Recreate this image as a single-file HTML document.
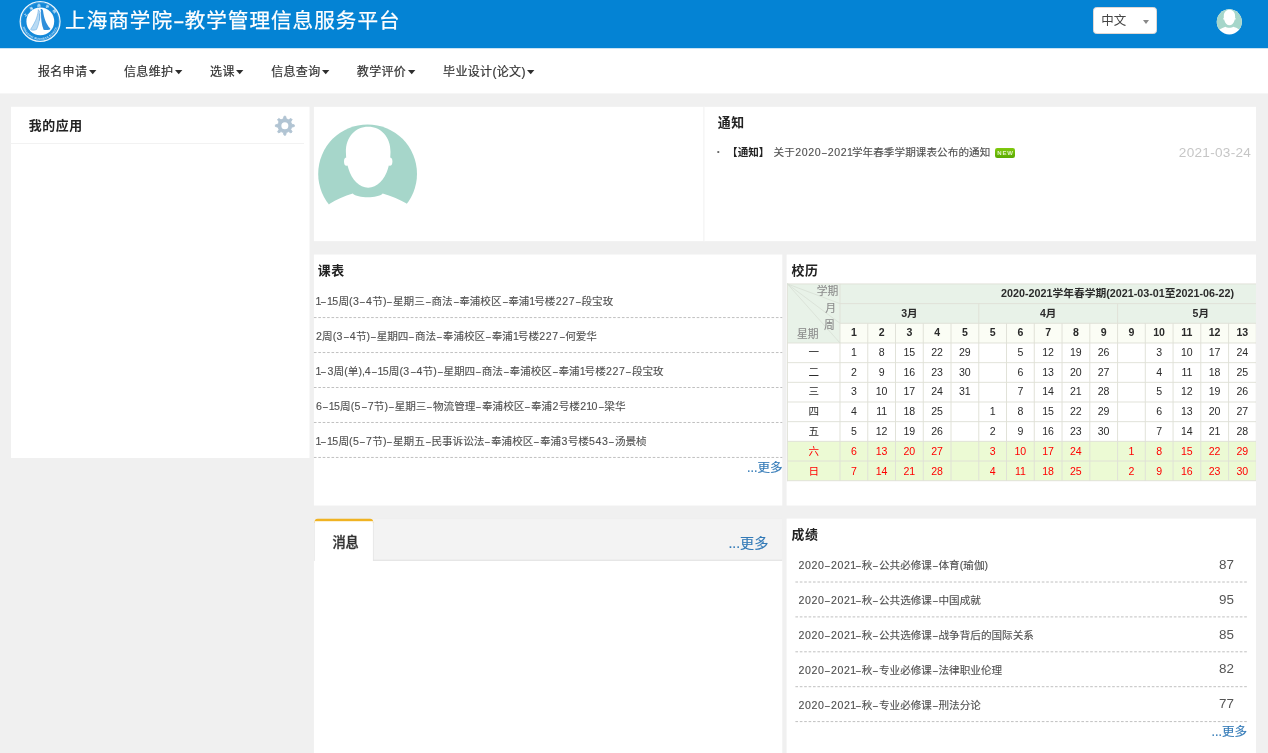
<!DOCTYPE html>
<html lang="zh-CN">
<head>
<meta charset="utf-8">
<title>上海商学院-教学管理信息服务平台</title>
<style>
*{box-sizing:border-box;margin:0;padding:0}
html,body{width:1268px;height:753px;overflow:hidden;background:#f0f0f0}
body{font-family:"Liberation Sans","Noto Sans CJK SC",sans-serif;color:#333;position:relative;font-size:10.4px}
i{font-style:normal}
a{text-decoration:none;color:#337ab7}
h3{margin:0}
.abs{position:absolute}
.t{position:absolute;white-space:nowrap}
#pg{position:absolute;left:0;top:0;width:1268px;height:753px;will-change:transform;overflow:hidden}
#hdr{position:absolute;left:0;top:0;width:1268px;height:48px}
#nav{position:absolute;left:0;top:48px;width:1268px;height:46px}
.ni{position:absolute;top:14.6px;font-size:12px;letter-spacing:.33px;line-height:18px;color:#333;white-space:nowrap;-webkit-text-stroke:.2px #333}
.caret{position:relative;display:inline-block;margin-left:1.5px;top:-1.1px;letter-spacing:0;vertical-align:baseline}
.h3{position:absolute;font-weight:bold;font-size:12.9px;letter-spacing:.6px;line-height:18px;color:#222;white-space:nowrap}
.row{position:absolute;font-size:10.6px;line-height:16px;color:#505050;white-space:nowrap;-webkit-text-stroke:0.12px #505050}
.row i{display:inline-block;text-align:center}
.row .h{width:6.6px;transform:scaleX(1.9);-webkit-text-stroke:0}
.row .d{width:6.5px}
.row .o{width:4.9px}
.row .p{width:3.6px}
.row .c{width:2.4px}
.more{position:absolute;font-size:12.5px;line-height:16px;color:#337ab7;white-space:nowrap;-webkit-text-stroke:.15px #337ab7}
#cal{position:absolute;left:787px;top:283px;width:469.05px;height:199px;overflow:hidden}
#cal table{position:absolute;left:0.45px;top:0.35px;border-collapse:collapse;table-layout:fixed;width:607.65px;font-size:10.57px;color:#2b2b2b}
#cal td,#cal th{border:0;text-align:center;padding:0;height:19.665px;line-height:14px;vertical-align:middle;font-weight:normal;overflow:hidden;white-space:nowrap}
#cal th{font-weight:bold;font-size:10.57px}
#cal tr.we td{color:#f00;position:relative;top:.7px}
#cal td.wd{font-size:10.57px}
</style>
</head>
<body>
<div id="pg">

<svg class="abs" style="left:0;top:0" width="1268" height="753" viewBox="0 0 1268 753"><rect x="0.00" y="0.00" width="1268.00" height="48.45" fill="#0483d4"/><rect x="0.00" y="48.45" width="1268.00" height="44.97" fill="#fff"/><rect x="10.95" y="106.80" width="298.55" height="351.15" fill="#fff"/><rect x="10.95" y="143.00" width="293.05" height="1.00" fill="#f2f2f2"/><rect x="313.90" y="106.85" width="942.15" height="134.29" fill="#fff"/><rect x="703.40" y="106.85" width="1.00" height="134.29" fill="#f1f1f1"/><rect x="313.90" y="254.53" width="468.37" height="251.03" fill="#fff"/><rect x="786.62" y="254.53" width="469.43" height="251.03" fill="#fff"/><rect x="313.90" y="518.57" width="468.37" height="234.43" fill="#fff"/><rect x="313.90" y="518.57" width="468.37" height="42.13" fill="#dcdcdc"/><rect x="313.90" y="518.57" width="468.37" height="41.23" fill="#f3f3f3"/><rect x="314.10" y="521.50" width="59.60" height="39.20" fill="#e4e4e4"/><path d="M314.6 523 V521.8 a3 3 0 0 1 3 -3 H370.1 a3 3 0 0 1 3 3 V523 Z" fill="#f0b323"/><rect x="314.70" y="521.20" width="58.20" height="39.80" fill="#fff"/><rect x="786.62" y="518.57" width="469.43" height="234.43" fill="#fff"/></svg>
<header id="hdr">
<svg class="abs" style="left:14px;top:0px" width="56" height="46" viewBox="14 0 56 46">
<defs>
<path id="arcT" d="M 24.6 23.5 A 15.6 15.6 0 1 1 57.8 23.5"/>
<path id="arcB" d="M 21.9 21.5 A 18.2 18.2 0 0 0 58.3 21.5"/>
</defs>
<circle cx="40.1" cy="21.5" r="19.9" fill="#1489d9" stroke="#e9f4fc" stroke-width="1.3"/>
<circle cx="40.1" cy="21.5" r="18.7" fill="none" stroke="#4ba6e4" stroke-width="0.5"/>
<circle cx="40.3" cy="21.4" r="13.9" fill="#fff"/>
<text font-family="'Noto Sans CJK SC',sans-serif" font-size="3.4" font-weight="bold" fill="#e4f2fc" text-anchor="middle" letter-spacing="4.4"><textPath href="#arcT" startOffset="50%">上海商学院</textPath></text>
<text font-family="'Liberation Sans',sans-serif" font-size="2.6" font-weight="bold" fill="#d4eafa" text-anchor="middle" letter-spacing="0.25"><textPath href="#arcB" startOffset="50%">SHANGHAI BUSINESS SCHOOL</textPath></text>
<path d="M38.3 9.6 C37.9 14.5 36.6 20.5 30.6 29.3 L31.2 30.1 C33.6 30.4 35.7 30 36.6 29.4 C38.8 24.5 40 18.5 40.2 12.4 Z" fill="#b9daf3" stroke="#5aa6e2" stroke-width="0.5"/>
<path d="M40.6 9.1 C42.2 9 42.9 9.6 43.1 11.2 C43.9 17.2 45.6 23.4 50.3 28.6 L50 29.4 C47.6 30.1 45.2 30.1 43.6 29.7 C41.7 25 41 19.2 41 14 C41 12.2 40.9 10.6 40.6 9.1 Z" fill="#2f8fdb"/>
<path d="M39.3 13.5 C39.6 15.5 39.8 18 39.5 20.5" fill="none" stroke="#5aa6e2" stroke-width="0.6"/>
</svg>
<div class="t" style="left:65.1px;top:5.9px;font-size:20.6px;line-height:30px;color:#fff;letter-spacing:1px;-webkit-text-stroke:.25px #fff">上海商学院<i style="display:inline-block;width:11.6px;text-align:center;letter-spacing:0;transform:scaleX(1.7)">-</i>教学管理信息服务平台</div>
<div class="abs" style="left:1093px;top:7px;width:64.2px;height:27px;background:#fff;border:1px solid #e0d8d4;border-radius:3.5px"></div>
<div class="t" style="left:1101.3px;top:11.8px;font-size:12.5px;line-height:18px;color:#444">中文</div>
<div class="abs" style="left:1142.6px;top:20px;width:0;height:0;border-top:4.6px solid #888;border-left:3px solid transparent;border-right:3px solid transparent"></div>
<svg class="abs" style="left:1214px;top:7px" width="30" height="30" viewBox="1214 7 30 30">
<circle cx="1229.3" cy="21.8" r="12.6" fill="#fff"/>
<g transform="translate(1229.3 21.8) scale(0.2545) translate(-367.6 -173.8)">
<g clip-path="url(#pc)"><circle cx="367.6" cy="173.8" r="49.4" fill="#a6d6ca"/></g>
<path d="M368.2 126.8 C381 126.8 390.7 137 390.5 152 C390.4 159 389.6 163.5 388 168.5 C384.8 179.5 377 187.7 368.2 187.7 C359.4 187.7 351.6 179.5 348.4 168.5 C346.8 163.5 346 159 345.9 152 C345.7 137 355.4 126.8 368.2 126.8 Z" fill="#fff"/>
<ellipse cx="346.6" cy="161.6" rx="2.6" ry="4.2" fill="#fff"/>
<ellipse cx="389.8" cy="161.6" rx="2.6" ry="4.2" fill="#fff"/>
</g></svg>
</header>
<nav id="nav">
<a class="ni" style="left:37.9px">报名申请<svg class="caret" width="8" height="5" viewBox="0 0 8 5"><path d="M0 0 L7.4 0 L3.7 4.2 Z" fill="#2e2e2e"/></svg></a>
<a class="ni" style="left:124px">信息维护<svg class="caret" width="8" height="5" viewBox="0 0 8 5"><path d="M0 0 L7.4 0 L3.7 4.2 Z" fill="#2e2e2e"/></svg></a>
<a class="ni" style="left:210.1px">选课<svg class="caret" width="8" height="5" viewBox="0 0 8 5"><path d="M0 0 L7.4 0 L3.7 4.2 Z" fill="#2e2e2e"/></svg></a>
<a class="ni" style="left:271.2px">信息查询<svg class="caret" width="8" height="5" viewBox="0 0 8 5"><path d="M0 0 L7.4 0 L3.7 4.2 Z" fill="#2e2e2e"/></svg></a>
<a class="ni" style="left:356.8px">教学评价<svg class="caret" width="8" height="5" viewBox="0 0 8 5"><path d="M0 0 L7.4 0 L3.7 4.2 Z" fill="#2e2e2e"/></svg></a>
<a class="ni" style="left:443.1px">毕业设计(论文)<svg class="caret" width="8" height="5" viewBox="0 0 8 5"><path d="M0 0 L7.4 0 L3.7 4.2 Z" fill="#2e2e2e"/></svg></a>
</nav>
<h3 class="h3" style="left:28.8px;top:117.0px">我的应用</h3>
<svg class="abs" style="left:274px;top:114px" width="22" height="23" viewBox="0 0 22 23"><path fill-rule="evenodd" fill="#b1c4d3" d="M9.38 4.86 L10.03 2.24 L11.67 2.24 L12.32 4.86 L14.65 5.82 L16.96 4.43 L18.12 5.59 L16.73 7.90 L17.69 10.23 L20.31 10.88 L20.31 12.52 L17.69 13.17 L16.73 15.50 L18.12 17.81 L16.96 18.97 L14.65 17.58 L12.32 18.54 L11.67 21.16 L10.03 21.16 L9.38 18.54 L7.05 17.58 L4.74 18.97 L3.58 17.81 L4.97 15.50 L4.01 13.17 L1.39 12.52 L1.39 10.88 L4.01 10.23 L4.97 7.90 L3.58 5.59 L4.74 4.43 L7.05 5.82 Z M7.35 11.70 a3.50 3.50 0 1 0 7.00 0 a3.50 3.50 0 1 0 -7.00 0 Z"/><path fill="none" stroke="#b1c4d3" stroke-width="0.9" stroke-linejoin="round" d="M9.38 4.86 L10.03 2.24 L11.67 2.24 L12.32 4.86 L14.65 5.82 L16.96 4.43 L18.12 5.59 L16.73 7.90 L17.69 10.23 L20.31 10.88 L20.31 12.52 L17.69 13.17 L16.73 15.50 L18.12 17.81 L16.96 18.97 L14.65 17.58 L12.32 18.54 L11.67 21.16 L10.03 21.16 L9.38 18.54 L7.05 17.58 L4.74 18.97 L3.58 17.81 L4.97 15.50 L4.01 13.17 L1.39 12.52 L1.39 10.88 L4.01 10.23 L4.97 7.90 L3.58 5.59 L4.74 4.43 L7.05 5.82 Z"/></svg>
<svg class="abs" style="left:316px;top:122px" width="104" height="90" viewBox="316 122 104 90">
<defs><clipPath id="pc"><path d="M316 122 H420 V212 H410 L406.6 203.6 C399 199.5 391 196 382.7 193.6 C378 198.6 357.5 198.6 352.8 193.6 C344.5 196 336.5 199.5 329.3 204 L326 212 H316 Z"/></clipPath></defs>
<g clip-path="url(#pc)"><circle cx="367.6" cy="173.8" r="49.4" fill="#a6d6ca"/></g>
<path d="M368.2 126.8 C381 126.8 390.7 137 390.5 152 C390.4 159 389.6 163.5 388 168.5 C384.8 179.5 377 187.7 368.2 187.7 C359.4 187.7 351.6 179.5 348.4 168.5 C346.8 163.5 346 159 345.9 152 C345.7 137 355.4 126.8 368.2 126.8 Z" fill="#fff"/>
<ellipse cx="346.6" cy="161.6" rx="2.6" ry="4.2" fill="#fff"/>
<ellipse cx="389.8" cy="161.6" rx="2.6" ry="4.2" fill="#fff"/>
</svg>
<h3 class="h3" style="left:717.8px;top:114.2px">通知</h3>
<div class="t" style="left:716.6px;top:144.4px;font-size:13px;font-weight:bold;line-height:16px;color:#666">·</div>
<div class="t" style="left:727.1px;top:143.9px;font-size:10.57px;line-height:16px;color:#222;font-weight:bold">【通知】</div>
<div class="row" style="left:773.6px;top:143.9px;letter-spacing:.06px">关于<i class="d">2</i><i class="d">0</i><i class="d">2</i><i class="d">0</i><i class="h">-</i><i class="d">2</i><i class="d">0</i><i class="d">2</i><i class="o">1</i>学年春季学期课表公布的通知</div>
<div class="abs" style="left:995.3px;top:148px;width:19.8px;height:10px;background:linear-gradient(#80c90e,#5aaa02);border-radius:2.2px;color:#e4f4cc;font-size:6px;font-weight:bold;line-height:10.4px;text-align:center;letter-spacing:.75px;text-indent:.6px;overflow:hidden">NEW</div>
<div class="t" style="left:1178.8px;top:143.9px;font-size:13.6px;line-height:18px;color:#c6c6c6;letter-spacing:.28px">2021-03-24</div>
<h3 class="h3" style="left:317.8px;top:262.0px">课表</h3>
<div class="row" style="left:315.6px;top:293.30px"><i class="o">1</i><i class="h">-</i><i class="o">1</i><i class="d">5</i>周<i class="p">(</i><i class="d">3</i><i class="h">-</i><i class="d">4</i>节<i class="p">)</i><i class="h">-</i>星期三<i class="h">-</i>商法<i class="h">-</i>奉浦校区<i class="h">-</i>奉浦<i class="o">1</i>号楼<i class="d">2</i><i class="d">2</i><i class="d">7</i><i class="h">-</i>段宝玫</div>
<div class="row" style="left:315.6px;top:328.25px"><i class="d">2</i>周<i class="p">(</i><i class="d">3</i><i class="h">-</i><i class="d">4</i>节<i class="p">)</i><i class="h">-</i>星期四<i class="h">-</i>商法<i class="h">-</i>奉浦校区<i class="h">-</i>奉浦<i class="o">1</i>号楼<i class="d">2</i><i class="d">2</i><i class="d">7</i><i class="h">-</i>何爱华</div>
<div class="row" style="left:315.6px;top:363.20px"><i class="o">1</i><i class="h">-</i><i class="d">3</i>周<i class="p">(</i>单<i class="p">)</i><i class="c">,</i><i class="d">4</i><i class="h">-</i><i class="o">1</i><i class="d">5</i>周<i class="p">(</i><i class="d">3</i><i class="h">-</i><i class="d">4</i>节<i class="p">)</i><i class="h">-</i>星期四<i class="h">-</i>商法<i class="h">-</i>奉浦校区<i class="h">-</i>奉浦<i class="o">1</i>号楼<i class="d">2</i><i class="d">2</i><i class="d">7</i><i class="h">-</i>段宝玫</div>
<div class="row" style="left:315.6px;top:398.15px"><i class="d">6</i><i class="h">-</i><i class="o">1</i><i class="d">5</i>周<i class="p">(</i><i class="d">5</i><i class="h">-</i><i class="d">7</i>节<i class="p">)</i><i class="h">-</i>星期三<i class="h">-</i>物流管理<i class="h">-</i>奉浦校区<i class="h">-</i>奉浦<i class="d">2</i>号楼<i class="d">2</i><i class="o">1</i><i class="d">0</i><i class="h">-</i>梁华</div>
<div class="row" style="left:315.6px;top:433.10px"><i class="o">1</i><i class="h">-</i><i class="o">1</i><i class="d">5</i>周<i class="p">(</i><i class="d">5</i><i class="h">-</i><i class="d">7</i>节<i class="p">)</i><i class="h">-</i>星期五<i class="h">-</i>民事诉讼法<i class="h">-</i>奉浦校区<i class="h">-</i>奉浦<i class="d">3</i>号楼<i class="d">5</i><i class="d">4</i><i class="d">3</i><i class="h">-</i>汤景桢</div>
<a class="more" style="left:747.1px;top:459.6px">...更多</a>
<h3 class="h3" style="left:791.4px;top:262.0px">校历</h3>
<div id="cal"><svg class="abs" style="left:0;top:0" width="470" height="199" viewBox="0 0 470 199"><rect x="0.45" y="0.95" width="480" height="59.03" fill="#e8f2e8"/><rect x="53.00" y="40.30" width="480" height="19.68" fill="#fbfdf5"/><rect x="0.45" y="158.35" width="480" height="39.35" fill="#ecfad4"/><path d="M0.00 0.95 H480 M53.00 20.62 H480 M53.00 40.30 H480 M0.00 59.98 H480 M0.00 79.65 H480 M0.00 99.33 H480 M0.00 119.00 H480 M0.00 138.67 H480 M0.00 158.35 H480 M0.00 178.03 H480 M0.00 197.70 H480 M0.45 0.50 V198.15 M53.00 0.95 V197.70 M191.78 20.62 V197.70 M330.55 20.62 V197.70 M497.08 20.62 V197.70 M80.75 40.30 V197.70 M108.51 40.30 V197.70 M136.26 40.30 V197.70 M164.02 40.30 V197.70 M219.53 40.30 V197.70 M247.28 40.30 V197.70 M275.04 40.30 V197.70 M302.79 40.30 V197.70 M358.31 40.30 V197.70 M386.06 40.30 V197.70 M413.81 40.30 V197.70 M441.57 40.30 V197.70 M469.32 40.30 V197.70" stroke="#dfe0d7" stroke-width="0.95" fill="none"/><path d="M0.45 0.95 L53.00 20.62 M0.45 0.95 L53.00 40.30 M0.45 0.95 L53.00 59.98" stroke="#d9e1d7" stroke-width="0.9" fill="none"/></svg><table>
<colgroup><col style="width:52.55px"><col style="width:27.755px"><col style="width:27.755px"><col style="width:27.755px"><col style="width:27.755px"><col style="width:27.755px"><col style="width:27.755px"><col style="width:27.755px"><col style="width:27.755px"><col style="width:27.755px"><col style="width:27.755px"><col style="width:27.755px"><col style="width:27.755px"><col style="width:27.755px"><col style="width:27.755px"><col style="width:27.755px"><col style="width:27.755px"><col style="width:27.755px"><col style="width:27.755px"><col style="width:27.755px"><col style="width:27.755px"></colgroup>
<tr><th rowspan="3" id="corner"></th><th colspan="20" style="font-size:10.75px">2020-2021学年春学期(2021-03-01至2021-06-22)</th></tr>
<tr class="mo"><th colspan="5">3月</th><th colspan="5">4月</th><th colspan="6">5月</th><th colspan="4"></th></tr>
<tr class="wk"><th>1</th><th>2</th><th>3</th><th>4</th><th>5</th><th>5</th><th>6</th><th>7</th><th>8</th><th>9</th><th>9</th><th>10</th><th>11</th><th>12</th><th>13</th><th></th><th></th><th></th><th></th><th></th></tr>
<tr><td class="wd">一</td><td>1</td><td>8</td><td>15</td><td>22</td><td>29</td><td></td><td>5</td><td>12</td><td>19</td><td>26</td><td></td><td>3</td><td>10</td><td>17</td><td>24</td><td></td><td></td><td></td><td></td><td></td></tr>
<tr><td class="wd">二</td><td>2</td><td>9</td><td>16</td><td>23</td><td>30</td><td></td><td>6</td><td>13</td><td>20</td><td>27</td><td></td><td>4</td><td>11</td><td>18</td><td>25</td><td></td><td></td><td></td><td></td><td></td></tr>
<tr><td class="wd">三</td><td>3</td><td>10</td><td>17</td><td>24</td><td>31</td><td></td><td>7</td><td>14</td><td>21</td><td>28</td><td></td><td>5</td><td>12</td><td>19</td><td>26</td><td></td><td></td><td></td><td></td><td></td></tr>
<tr><td class="wd">四</td><td>4</td><td>11</td><td>18</td><td>25</td><td></td><td>1</td><td>8</td><td>15</td><td>22</td><td>29</td><td></td><td>6</td><td>13</td><td>20</td><td>27</td><td></td><td></td><td></td><td></td><td></td></tr>
<tr><td class="wd">五</td><td>5</td><td>12</td><td>19</td><td>26</td><td></td><td>2</td><td>9</td><td>16</td><td>23</td><td>30</td><td></td><td>7</td><td>14</td><td>21</td><td>28</td><td></td><td></td><td></td><td></td><td></td></tr>
<tr class="we"><td class="wd">六</td><td>6</td><td>13</td><td>20</td><td>27</td><td></td><td>3</td><td>10</td><td>17</td><td>24</td><td></td><td>1</td><td>8</td><td>15</td><td>22</td><td>29</td><td></td><td></td><td></td><td></td><td></td></tr>
<tr class="we"><td class="wd">日</td><td>7</td><td>14</td><td>21</td><td>28</td><td></td><td>4</td><td>11</td><td>18</td><td>25</td><td></td><td>2</td><td>9</td><td>16</td><td>23</td><td>30</td><td></td><td></td><td></td><td></td><td></td></tr>
</table>
<div class="t" style="left:29.7px;top:0.8px;font-size:10.8px;line-height:15px;color:#8c8c8c;-webkit-text-stroke:.12px #8c8c8c">学期</div>
<div class="t" style="left:38.2px;top:17.7px;font-size:10.8px;line-height:15px;color:#8c8c8c;-webkit-text-stroke:.12px #8c8c8c">月</div>
<div class="t" style="left:37px;top:35.2px;font-size:10.8px;line-height:15px;color:#8c8c8c;-webkit-text-stroke:.12px #8c8c8c">周</div>
<div class="t" style="left:10px;top:44.4px;font-size:10.8px;line-height:15px;color:#8c8c8c;-webkit-text-stroke:.12px #8c8c8c">星期</div>
</div>
<div class="t" style="left:332.4px;top:533.5px;font-size:13.2px;line-height:18px;color:#333;font-weight:500;-webkit-text-stroke:.35px #333">消息</div>
<a class="more" style="left:728.4px;top:535px;font-size:14.09px">...更多</a>
<h3 class="h3" style="left:791.5px;top:525.8px">成绩</h3>
<div class="row" style="left:798.2px;top:557.10px"><i class="d">2</i><i class="d">0</i><i class="d">2</i><i class="d">0</i><i class="h">-</i><i class="d">2</i><i class="d">0</i><i class="d">2</i><i class="o">1</i><i class="h">-</i>秋<i class="h">-</i>公共必修课<i class="h">-</i>体育<i class="p">(</i>瑜伽<i class="p">)</i></div>
<div class="t" style="left:1219.1px;top:556.70px;font-size:13.4px;line-height:16px;color:#555">87</div>
<div class="row" style="left:798.2px;top:592.03px"><i class="d">2</i><i class="d">0</i><i class="d">2</i><i class="d">0</i><i class="h">-</i><i class="d">2</i><i class="d">0</i><i class="d">2</i><i class="o">1</i><i class="h">-</i>秋<i class="h">-</i>公共选修课<i class="h">-</i>中国成就</div>
<div class="t" style="left:1219.1px;top:591.63px;font-size:13.4px;line-height:16px;color:#555">95</div>
<div class="row" style="left:798.2px;top:626.96px"><i class="d">2</i><i class="d">0</i><i class="d">2</i><i class="d">0</i><i class="h">-</i><i class="d">2</i><i class="d">0</i><i class="d">2</i><i class="o">1</i><i class="h">-</i>秋<i class="h">-</i>公共选修课<i class="h">-</i>战争背后的国际关系</div>
<div class="t" style="left:1219.1px;top:626.56px;font-size:13.4px;line-height:16px;color:#555">85</div>
<div class="row" style="left:798.2px;top:661.89px"><i class="d">2</i><i class="d">0</i><i class="d">2</i><i class="d">0</i><i class="h">-</i><i class="d">2</i><i class="d">0</i><i class="d">2</i><i class="o">1</i><i class="h">-</i>秋<i class="h">-</i>专业必修课<i class="h">-</i>法律职业伦理</div>
<div class="t" style="left:1219.1px;top:661.49px;font-size:13.4px;line-height:16px;color:#555">82</div>
<div class="row" style="left:798.2px;top:696.82px"><i class="d">2</i><i class="d">0</i><i class="d">2</i><i class="d">0</i><i class="h">-</i><i class="d">2</i><i class="d">0</i><i class="d">2</i><i class="o">1</i><i class="h">-</i>秋<i class="h">-</i>专业必修课<i class="h">-</i>刑法分论</div>
<div class="t" style="left:1219.1px;top:696.42px;font-size:13.4px;line-height:16px;color:#555">77</div>
<a class="more" style="left:1211.5px;top:724px">...更多</a>
<svg class="abs" style="left:0;top:0" width="1268" height="753" viewBox="0 0 1268 753"><line x1="313.90" y1="317.57" x2="782.30" y2="317.57" stroke="#c0c0c0" stroke-width="1" stroke-dasharray="2.64 1.76"/><line x1="313.90" y1="352.54" x2="782.30" y2="352.54" stroke="#c0c0c0" stroke-width="1" stroke-dasharray="2.64 1.76"/><line x1="313.90" y1="387.51" x2="782.30" y2="387.51" stroke="#c0c0c0" stroke-width="1" stroke-dasharray="2.64 1.76"/><line x1="313.90" y1="422.48" x2="782.30" y2="422.48" stroke="#c0c0c0" stroke-width="1" stroke-dasharray="2.64 1.76"/><line x1="313.90" y1="457.45" x2="782.30" y2="457.45" stroke="#c0c0c0" stroke-width="1" stroke-dasharray="2.64 1.76"/><line x1="795.40" y1="582.00" x2="1247.00" y2="582.00" stroke="#c0c0c0" stroke-width="1" stroke-dasharray="2.64 1.76"/><line x1="795.40" y1="616.90" x2="1247.00" y2="616.90" stroke="#c0c0c0" stroke-width="1" stroke-dasharray="2.64 1.76"/><line x1="795.40" y1="651.80" x2="1247.00" y2="651.80" stroke="#c0c0c0" stroke-width="1" stroke-dasharray="2.64 1.76"/><line x1="795.40" y1="686.70" x2="1247.00" y2="686.70" stroke="#c0c0c0" stroke-width="1" stroke-dasharray="2.64 1.76"/><line x1="795.40" y1="721.60" x2="1247.00" y2="721.60" stroke="#c0c0c0" stroke-width="1" stroke-dasharray="2.64 1.76"/></svg>
</div>
</body>
</html>
